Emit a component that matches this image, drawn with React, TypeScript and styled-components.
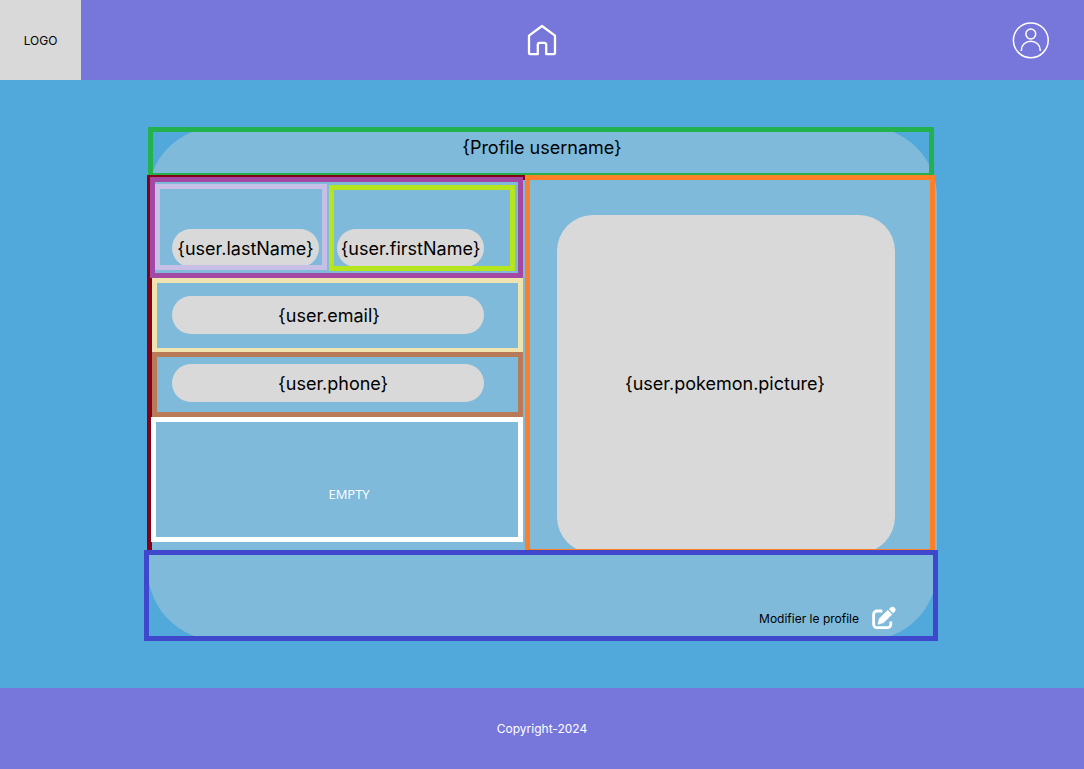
import React from "react";
import styled, { createGlobalStyle } from "styled-components";

const colors = {
  bar: "#7777db",
  page: "#51a8da",
  card: "#7fbada",
  grey: "#d9d9d9",
};

const GlobalStyle = createGlobalStyle`
  *, *::before, *::after { box-sizing: border-box; }
  body { margin: 0; background: ${colors.page}; font-family: Inter, "Liberation Sans", sans-serif; color: #000; }
  h1, p { margin: 0; font-weight: 400; }
`;

const Page = styled.div`
  display: flex;
  flex-direction: column;
  min-height: 100vh;
`;

const Header = styled.header`
  display: grid;
  grid-template-columns: 1fr auto 1fr;
  align-items: center;
  height: 80px;
  background: ${colors.bar};
`;

const Logo = styled.a`
  display: flex;
  align-items: center;
  justify-content: center;
  width: 81px;
  height: 80px;
  background: ${colors.grey};
  color: #000;
  font-size: 12px;
  text-decoration: none;
`;

const IconLink = styled.a`
  display: flex;
  color: #fff;
`;

const Account = styled(IconLink)`
  justify-self: end;
  margin-right: 34px;
`;

const Main = styled.main`
  flex: 1;
  padding: 47px 147px 48px 148px;
  background: ${colors.page};
`;

const Card = styled.section`
  display: flex;
  flex-direction: column;
  border-radius: 70px;
  background: ${colors.card};
`;

const Frame = styled.div<{ $color: string }>`
  border: 5px solid ${(p) => p.$color};
  overflow: hidden;
`;

const TitleFrame = styled(Frame)`
  height: 51px;
  margin-right: 3px;
  padding-left: 2px;
`;

const Title = styled.h1`
  font-size: 18px;
  line-height: 32px;
  text-align: center;
`;

const Columns = styled.div`
  display: grid;
  grid-template-columns: 378fr 410fr;
  margin: -3px 2px 0 -1px;
`;

const Details = styled.div`
  display: flex;
  flex-direction: column;
  min-width: 0;
  border: solid #880015;
  border-width: 5px 0 0 5px;
`;

const NameFrame = styled(Frame)`
  display: grid;
  grid-template-columns: 172fr 186fr;
  column-gap: 2px;
  height: 101px;
  margin: -3px 2px 0 -2px;
  padding: 2px 3px 2px 0;
`;

const NameCell = styled(Frame)<{ $align: "start" | "end"; $pad: string }>`
  align-self: ${(p) => p.$align};
  height: 86px;
  min-width: 0;
  padding: ${(p) => p.$pad};
`;

const FieldFrame = styled(Frame)<{ $height: number; $top: number }>`
  height: ${(p) => p.$height}px;
  margin-right: 2px;
  padding: ${(p) => p.$top}px 34px 0 15px;

  & + & {
    margin-top: -1px;
  }
`;

const Pill = styled.p`
  display: flex;
  align-items: center;
  justify-content: center;
  height: 38px;
  border-radius: 19px;
  background: ${colors.grey};
  font-size: 18px;
  white-space: nowrap;
`;

const WidePill = styled(Pill)`
  justify-content: flex-start;
  padding-left: 34%;
`;

const EmptyFrame = styled(Frame)`
  display: flex;
  align-items: center;
  justify-content: center;
  height: 125px;
  margin: 0 2px 0 -1px;
  padding: 28px 0 0 24px;
  color: #fff;
  font-family: "Open Sans", "Noto Sans", sans-serif;
  font-size: 13px;
`;

const PictureFrame = styled(Frame)`
  min-width: 0;
  padding: 35px 35px 0 27px;
`;

const Picture = styled.div`
  display: flex;
  align-items: center;
  justify-content: center;
  aspect-ratio: 1;
  margin-bottom: -4px;
  padding: 0 2px 2px 0;
  border-radius: 36px;
  background: ${colors.grey};
  font-size: 18px;
`;

const Actions = styled(Frame)`
  position: relative;
  display: flex;
  align-items: flex-end;
  justify-content: flex-end;
  height: 91px;
  margin: -4px -1px -1px -4px;
  padding: 0 37px 6px 0;
`;

const EditButton = styled.button`
  display: flex;
  align-items: center;
  gap: 13px;
  padding: 0;
  border: 0;
  background: none;
  color: #000;
  font: inherit;
  font-size: 12px;
  cursor: pointer;
`;

const Footer = styled.footer`
  display: flex;
  align-items: center;
  justify-content: center;
  height: 81px;
  background: ${colors.bar};
  color: #fff;
  font-size: 12px;
`;

const HomeIcon = () => (
  <svg width="30" height="32" viewBox="0 0 30 32" fill="none" stroke="currentColor" strokeWidth="2.3" strokeLinejoin="round" aria-hidden="true">
    <path d="M15 2 28 11.6V29a1.2 1.2 0 0 1-1.2 1.2H19.2V20.6a1.8 1.8 0 0 0-1.8-1.8h-4.8a1.8 1.8 0 0 0-1.8 1.8v9.6H3.2A1.2 1.2 0 0 1 2 29V11.6Z" />
  </svg>
);

const UserIcon = () => (
  <svg width="38" height="38" viewBox="0 0 38 38" fill="none" stroke="currentColor" strokeWidth="1.5" aria-hidden="true">
    <circle cx="18.8" cy="19.3" r="17.4" />
    <circle cx="18.8" cy="13" r="4.9" />
    <path d="M9.4 30.1V28.9a9.4 8.6 0 0 1 18.8 0v1.2" />
  </svg>
);

const EditIcon = () => (
  <svg width="24" height="24" viewBox="0 0 24 24" fill="none" aria-hidden="true">
    <path d="M10.4 5H5a3.4 3.4 0 0 0-3.4 3.4v9.9A3.4 3.4 0 0 0 5 21.7h10.4a3.4 3.4 0 0 0 3.4-3.4V15.6" stroke="#fff" strokeWidth="2.8" />
    <path d="M6 18.3 7.4 12.5 15.8 4.3 19.9 8.4 11.7 16.6Z" fill="#fff" stroke="#fff" strokeWidth="0.6" strokeLinejoin="round" />
    <path d="M16.9 3.2 18.6 1.6a2.9 2.9 0 0 1 4.1 4.1L21 7.3Z" fill="#fff" />
  </svg>
);

export default function App() {
  return (
    <>
      <GlobalStyle />
      <Page>
        <Header>
          <Logo href="#">LOGO</Logo>
          <IconLink href="#" aria-label="Accueil">
            <HomeIcon />
          </IconLink>
          <Account href="#" aria-label="Profil">
            <UserIcon />
          </Account>
        </Header>
        <Main>
          <Card>
            <TitleFrame $color="#22b14c">
              <Title>{"{Profile username}"}</Title>
            </TitleFrame>
            <Columns>
              <Details>
                <NameFrame $color="#a349a4">
                  <NameCell $color="#c8bfe7" $align="start" $pad="40px 3px 0 12px">
                    <Pill>{"{user.lastName}"}</Pill>
                  </NameCell>
                  <NameCell $color="#b5e61d" $align="end" $pad="39px 26px 0 3px">
                    <Pill>{"{user.firstName}"}</Pill>
                  </NameCell>
                </NameFrame>
                <FieldFrame $color="#efe4b0" $height={75} $top={13}>
                  <WidePill>{"{user.email}"}</WidePill>
                </FieldFrame>
                <FieldFrame $color="#b97a57" $height={65} $top={7}>
                  <WidePill>{"{user.phone}"}</WidePill>
                </FieldFrame>
                <EmptyFrame $color="#fff">EMPTY</EmptyFrame>
              </Details>
              <PictureFrame $color="#ff7f27">
                <Picture>{"{user.pokemon.picture}"}</Picture>
              </PictureFrame>
            </Columns>
            <Actions $color="#3f48cc">
              <EditButton type="button">
                Modifier le profile
                <EditIcon />
              </EditButton>
            </Actions>
          </Card>
        </Main>
        <Footer>Copyright-2024</Footer>
      </Page>
    </>
  );
}
